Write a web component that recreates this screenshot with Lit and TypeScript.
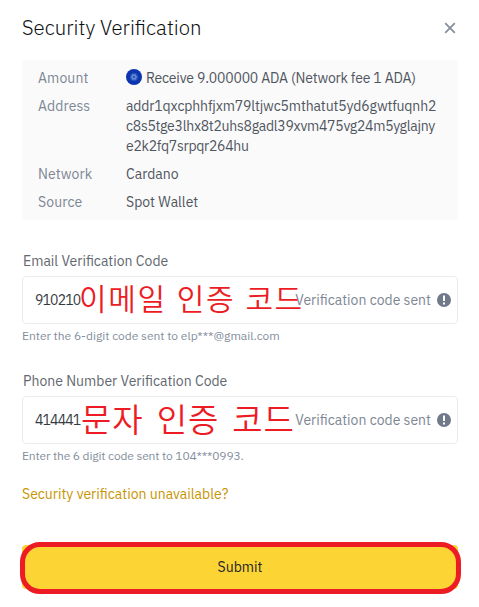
import { LitElement, html, css, svg } from "lit";
import { customElement, property } from "lit/decorators.js";

const FONT = css`"IBM Plex Sans", Roboto, "Noto Sans CJK KR", sans-serif`;

@customElement("detail-row")
class DetailRow extends LitElement {
  @property() label = "";

  static styles = css`
    :host { display: flex; line-height: 20px; }
    .label { flex: 0 0 88px; color: #7d8795; letter-spacing: 0.1px; }
    .value { flex: 1; min-width: 0; color: #50565f; white-space: nowrap; }
  `;

  render() {
    return html`<div class="label">${this.label}</div><div class="value"><slot></slot></div>`;
  }
}

@customElement("code-field")
class CodeField extends LitElement {
  @property() label = "";
  @property() code = "";
  @property() hint = "";

  static styles = css`
    :host { display: block; height: 120px; }
    .label { height: 20px; line-height: 20px; padding-left: 1px; margin-bottom: 5px; color: #62686f; white-space: nowrap; }
    .box { position: relative; box-sizing: border-box; height: 48px; border: 1px solid #eaecef; border-radius: 4px; display: flex; align-items: center; justify-content: space-between; padding: 0 6px 0 12px; }
    .code { color: #353a40; font-size: 14px; letter-spacing: -0.85px; }
    .status { display: flex; align-items: center; gap: 6px; color: #7d8795; white-space: nowrap; }
    svg { display: block; }
    .hint { height: 16px; line-height: 16px; margin-top: 4px; font-size: 12px; color: #848e9c; letter-spacing: var(--hint-spacing, 0); white-space: nowrap; }
  `;

  render() {
    return html`
      <div class="label">${this.label}</div>
      <div class="box">
        <span class="code">${this.code}</span>
        <span class="status">
          <span>Verification code sent</span>
          <svg width="14" height="14" viewBox="0 0 14 14">
            <circle cx="7" cy="7" r="7" fill="#707a8a" />
            <path d="M6 2.5h2v5.5h-2zM6 9.4h2v2h-2z" fill="#fff" />
          </svg>
        </span>
        <slot></slot>
      </div>
      <div class="hint">${this.hint}</div>
    `;
  }
}

const dots = Array.from({ length: 6 }, (_, i) => {
  const a = (i * Math.PI) / 3;
  return { x: 8 + 2 * Math.cos(a), y: 8 + 2 * Math.sin(a) };
});

@customElement("app-root")
class AppRoot extends LitElement {
  static styles = css`
    :host { display: block; box-sizing: border-box; width: 479px; height: 607px; padding: 14px 21px 0 22px; background: #fff; font: 400 14px/20px ${FONT}; overflow: hidden; }
    header { display: flex; align-items: center; justify-content: space-between; height: 28px; padding-right: 2px; }
    h1 { margin: 0; font-size: 20.4px; line-height: 28px; font-weight: 300; color: #0b0e11; }
    .close { display: block; }
    .details { display: flex; flex-direction: column; gap: 8px; margin-top: 18px; padding: 8px 16px; background: #fafafa; border-radius: 4px; }
    .amount { display: flex; align-items: center; gap: 4px; letter-spacing: -0.18px; }
    .coin { display: block; margin-top: -3px; }
    .line-a { letter-spacing: -0.13px; }
    .line-b { letter-spacing: -0.27px; }
    .fields { margin-top: 31px; }
    .mail-field { --hint-spacing: -0.03px; }
    .phone-field { --hint-spacing: -0.14px; }
    .note { position: absolute; color: #ed1c24; font-family: "Noto Sans CJK KR", sans-serif; font-weight: 350; line-height: 40px; white-space: nowrap; }
    .mail { left: 56px; top: 0; font-size: 30px; letter-spacing: 1.6px; word-spacing: 1.9px; }
    .phone { left: 58px; top: 1px; font-size: 33px; letter-spacing: 0.9px; word-spacing: 4.9px; }
    .link { display: block; margin-top: -7px; line-height: 20px; color: #c99400; }
    .submit { position: relative; display: flex; align-items: center; justify-content: center; height: 44px; margin-top: 41px; background: #fcd535; border-radius: 4px; color: #1e2329; }
    .ring { position: absolute; left: -2px; right: -3px; top: -3px; bottom: -5px; border: 5px solid #ed1c24; border-radius: 20px; }
  `;

  render() {
    return html`
      <header>
        <h1>Security Verification</h1>
        <svg class="close" width="12" height="12" viewBox="0 0 12 12">
          <path d="M1.2 1.2L10.8 10.8M10.8 1.2L1.2 10.8" stroke="#848e9c" stroke-width="1.7" />
        </svg>
      </header>
      <section class="details">
        <detail-row label="Amount">
          <div class="amount">
            <svg class="coin" width="16" height="16" viewBox="0 0 16 16">
              <circle cx="8" cy="8" r="8" fill="#0c35af" />
              <circle cx="8" cy="8" r="4" fill="#2b56bd" />
              ${dots.map((d) => svg`<circle cx=${d.x} cy=${d.y} r="0.9" fill="#7595dc" />`)}
            </svg>
            <span>Receive 9.000000 ADA (Network fee 1 ADA)</span>
          </div>
        </detail-row>
        <detail-row label="Address">
          <div class="line-a">addr1qxcphhfjxm79ltjwc5mthatut5yd6gwtfuqnh2</div>
          <div class="line-b">c8s5tge3lhx8t2uhs8gadl39xvm475vg24m5yglajny</div>
          <div class="line-b">e2k2fq7srpqr264hu</div>
        </detail-row>
        <detail-row label="Network">Cardano</detail-row>
        <detail-row label="Source">Spot Wallet</detail-row>
      </section>
      <section class="fields">
        <code-field class="mail-field" label="Email Verification Code" code="910210" hint="Enter the 6-digit code sent to elp***@gmail.com">
          <span class="note mail">이메일 인증 코드</span>
        </code-field>
        <code-field class="phone-field" label="Phone Number Verification Code" code="414441" hint="Enter the 6 digit code sent to 104***0993.">
          <span class="note phone">문자 인증 코드</span>
        </code-field>
      </section>
      <span class="link">Security verification unavailable?</span>
      <div class="submit">Submit<span class="ring"></span></div>
    `;
  }
}
